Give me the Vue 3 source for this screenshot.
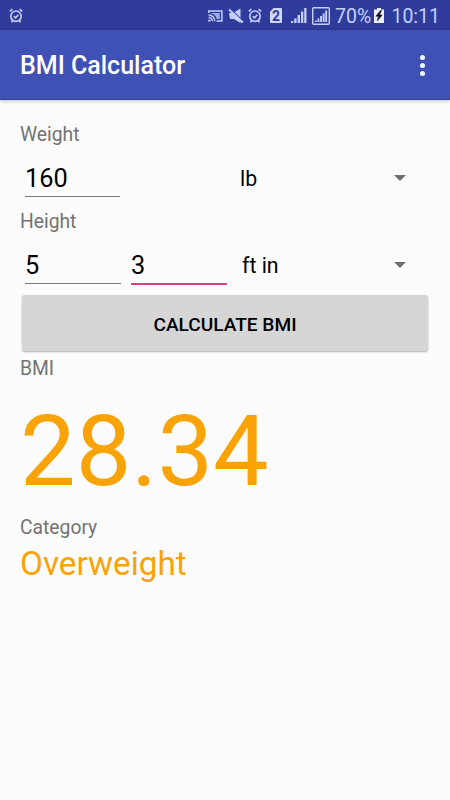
<template>
  <div class="screen">
    <header class="status-bar">
      <svg class="alarm-left" width="14" height="16" viewBox="0 0 14 16">
        <g fill="none" stroke="currentColor" stroke-width="1.6">
          <circle cx="7" cy="8.2" r="5.2" />
          <path d="M4.8 8.2l1.7 1.6 2.9-3M.8 3.4l2.6-2.2M13.2 3.4l-2.6-2.2M3.6 12.4l-1 2M10.4 12.4l1 2" />
        </g>
      </svg>

      <!-- cast -->
      <svg class="cast" width="15" height="12" viewBox="0 0 15 12">
        <path d="M.7 3V.9h13.2v10.2H8.6" fill="none" stroke="currentColor" stroke-width="1.5" />
        <path d="M3.5 3h8.2v6H8.6C8.2 6 6.500 4.3 3.5 3.8z" fill="currentColor" opacity=".75" />
        <path d="M.6 5a6.2 6.2 0 0 1 6.2 6.2M.6 7.5a3.7 3.7 0 0 1 3.7 3.700" fill="none" stroke="currentColor" stroke-width="1.5" />
        <circle cx="1.3" cy="10.6" r="1.2" fill="currentColor" />
      </svg>
      <!-- muted -->
      <svg class="mute" width="16" height="16" viewBox="0 0 16 16">
        <path d="M1 5h4L12.500.5V15L6 11H2z" fill="currentColor" />
        <path d="M3 1.400l12.500 12" stroke="#303c9c" stroke-width="1.200" />
        <path d="M1 1.600l13.800 13" stroke="currentColor" stroke-width="2" />
      </svg>
      <svg class="alarm" width="14" height="16" viewBox="0 0 14 16">
        <g fill="none" stroke="currentColor" stroke-width="1.6">
          <circle cx="7" cy="8.2" r="5.2" />
          <path d="M4.8 8.2l1.7 1.6 2.9-3M.8 3.4l2.6-2.2M13.2 3.4l-2.6-2.2M3.6 12.4l-1 2M10.4 12.4l1 2" />
        </g>
      </svg>
      <span class="sim">2</span>
      <!-- signal strength -->
      <svg class="signal" width="16" height="15" viewBox="0 0 16 15">
        <path d="M0 15v-2h2.200v2zM3.200 15v-4.500h2.400v4.500zM6.600 15V7h2.400v8zM10 15V3.500h2.300V15zM13.200 15V0h2.300v15z" fill="currentColor" />
      </svg>
      <svg class="signal-box" width="18" height="18" viewBox="0 0 18 18">
        <rect x=".7" y=".7" width="16.6" height="16.6" rx="1" fill="none" stroke="currentColor" stroke-width="1.4" />
        <path d="M3 15v-1.500h1.800V15zM5.500 15v-3.500h1.900V15zM8.100 15V9H10v6zM10.700 15V6.500h1.900V15zM13.200 15V3.500h1.900V15z" fill="currentColor" />
      </svg>
      <span class="percent">70%</span>
      <svg class="battery" width="10" height="15" viewBox="0 0 10 15">
        <path d="M3 0h4v1.500h3V15H0V1.500h3z" fill="#eef1fc" />
        <path d="M6.500 2.500L1.800 8.300h2.700L3.200 13l5-6H5.500l2-4.500z" fill="#10122e" stroke="#10122e" stroke-width=".6" />
      </svg>
      <span class="clock">10:11</span>
    </header>

    <div class="app-bar">
      <h1>BMI Calculator</h1>
      <button class="menu" aria-label="More options">
        <i></i><i></i><i></i>
      </button>
    </div>

    <main>
      <label class="label">Weight</label>
      <div class="row">
        <input v-model="weight" class="field weight" />
        <div class="spinner weight-unit">
          <select v-model="weightUnit">
            <option v-for="unit in weightUnits" :key="unit">{{ unit }}</option>
          </select>
        </div>
      </div>

      <label class="label">Height</label>
      <div class="row">
        <input v-model="feet" class="field" />
        <input v-model="inches" class="field active" />
        <div class="spinner height-unit">
          <select v-model="heightUnit">
            <option v-for="unit in heightUnits" :key="unit">{{ unit }}</option>
          </select>
        </div>
      </div>

      <button class="calculate" @click="calculate">CALCULATE BMI</button>

      <div class="label bmi-label">BMI</div>
      <div class="bmi" :class="level">{{ bmi.toFixed(2) }}</div>
      <div class="label">Category</div>
      <div class="category" :class="level">{{ category }}</div>
    </main>
  </div>
</template>

<script setup>
import { ref, computed } from 'vue';

const weightUnits = ['lb', 'kg'];
const heightUnits = ['ft in', 'm cm'];

const weight = ref('160');
const feet = ref('5');
const inches = ref('3');
const weightUnit = ref('lb');
const heightUnit = ref('ft in');
const bmi = ref(0);

function calculate() {
  const kg = Number(weight.value) * (weightUnit.value === 'lb' ? 0.45359237 : 1);
  const major = Number(feet.value);
  const minor = Number(inches.value);
  const meters = heightUnit.value === 'ft in'
    ? (major * 12 + minor) * 0.0254
    : major + minor / 100;
  bmi.value = meters > 0 ? kg / (meters * meters) : 0;
}

const category = computed(() => {
  if (bmi.value < 18.5) return 'Underweight';
  if (bmi.value < 25) return 'Normal';
  if (bmi.value < 30) return 'Overweight';
  return 'Obese';
});

const level = computed(() => category.value.toLowerCase());

calculate();
</script>

<style>
body {
  background: #fcfcfc;
}
</style>

<style scoped>
.screen {
  min-height: 800px;
  background: #fcfcfc;
  font-family: Roboto, "Liberation Sans", sans-serif;
  color: #000;
}

.status-bar {
  display: flex;
  align-items: center;
  height: 30px;
  padding: 1px 10px 0 9px;
  box-sizing: border-box;
  background: #303c9c;
  color: #c4cffc;
  font-size: 19.5px;
  line-height: 30px;
}

.status-bar svg,
.status-bar span {
  flex: none;
}

.cast {
  margin-left: 185px;
}

.mute {
  margin-left: 5px;
}

.alarm {
  margin-left: 4px;
}

.sim {
  width: 12px;
  height: 15px;
  margin-left: 8px;
  background: #d0d9fc;
  border-radius: 1px;
  clip-path: polygon(30% 0, 100% 0, 100% 100%, 0 100%, 0 25%);
  color: #303c9c;
  font-size: 14px;
  font-weight: 700;
  line-height: 16px;
  text-align: center;
}

.signal {
  margin-left: 9px;
}

.signal-box {
  margin-left: 5px;
}

.percent {
  width: 35px;
  margin-left: 5px;
  padding-top: 2px;
  white-space: nowrap;
}

.battery {
  margin-left: 4px;
}

.clock {
  margin-left: auto;
  padding-top: 2px;
}

.app-bar {
  display: flex;
  align-items: center;
  justify-content: space-between;
  height: 70px;
  padding: 1px 20px 0;
  box-sizing: border-box;
  background: #3f51b5;
  border-bottom: 1px solid #35449c;
  box-shadow: 0 1px 4px rgba(0, 0, 0, 0.25);
}

h1 {
  margin: 2px 0 0;
  color: #fff;
  font-size: 25px;
  font-weight: 500;
  line-height: 30px;
}

.menu {
  display: flex;
  flex-direction: column;
  align-items: center;
  gap: 3px;
  width: 15px;
  padding: 0;
  border: none;
  background: none;
}

.menu i {
  width: 5px;
  height: 5px;
  border-radius: 50%;
  background: #f0fbff;
}

main {
  padding: 22px 20px 0;
}

.label {
  display: block;
  height: 24px;
  color: #737373;
  font-size: 19.3px;
  line-height: 26px;
}

.row {
  display: flex;
  align-items: flex-start;
  height: 63px;
  padding-left: 5px;
}

.field {
  width: 96px;
  height: 51px;
  margin-right: 10px;
  padding: 14px 0 0;
  box-sizing: border-box;
  border: none;
  border-bottom: 1px solid #777;
  border-radius: 0;
  outline: none;
  background: none;
  color: #000;
  font: 25.3px/30px Roboto, "Liberation Sans", sans-serif;
}

.field.weight {
  width: 95px;
}

.field.active {
  height: 52px;
  border-bottom: 2px solid #d8407f;
}

.spinner {
  display: flex;
  align-items: center;
  flex: 1;
  height: 63px;
  padding-right: 24px;
}

.weight-unit {
  margin-left: 110px;
}

.height-unit {
  margin-left: 5px;
}

.spinner select {
  flex: 1;
  padding: 3px 0 0;
  border: none;
  outline: none;
  appearance: none;
  background: none;
  color: #000;
  font: 21.3px/28px Roboto, "Liberation Sans", sans-serif;
}

.spinner::after {
  content: "";
  border: 6px solid transparent;
  border-top-color: #6e6e6e;
  border-bottom: none;
}

.calculate {
  display: block;
  width: 406px;
  height: 56px;
  margin: -1px 0 0 2px;
  padding: 2px 0 0;
  border: none;
  border-radius: 3px;
  background: #d6d6d6;
  box-shadow: 0 1px 2px rgba(0, 0, 0, 0.3);
  color: #000;
  font: 500 19.1px/56px Roboto, "Liberation Sans", sans-serif;
}

.bmi-label {
  margin-top: 5px;
}

.bmi {
  margin: 12px 0 5px;
  color: #4caf50;
  font-size: 99px;
  line-height: 118px;
}

.category {
  margin-top: 5px;
  color: #4caf50;
  font-size: 33.3px;
  line-height: 40px;
}

.overweight {
  color: #faa307;
}

.underweight,
.obese {
  color: #e53935;
}
</style>
